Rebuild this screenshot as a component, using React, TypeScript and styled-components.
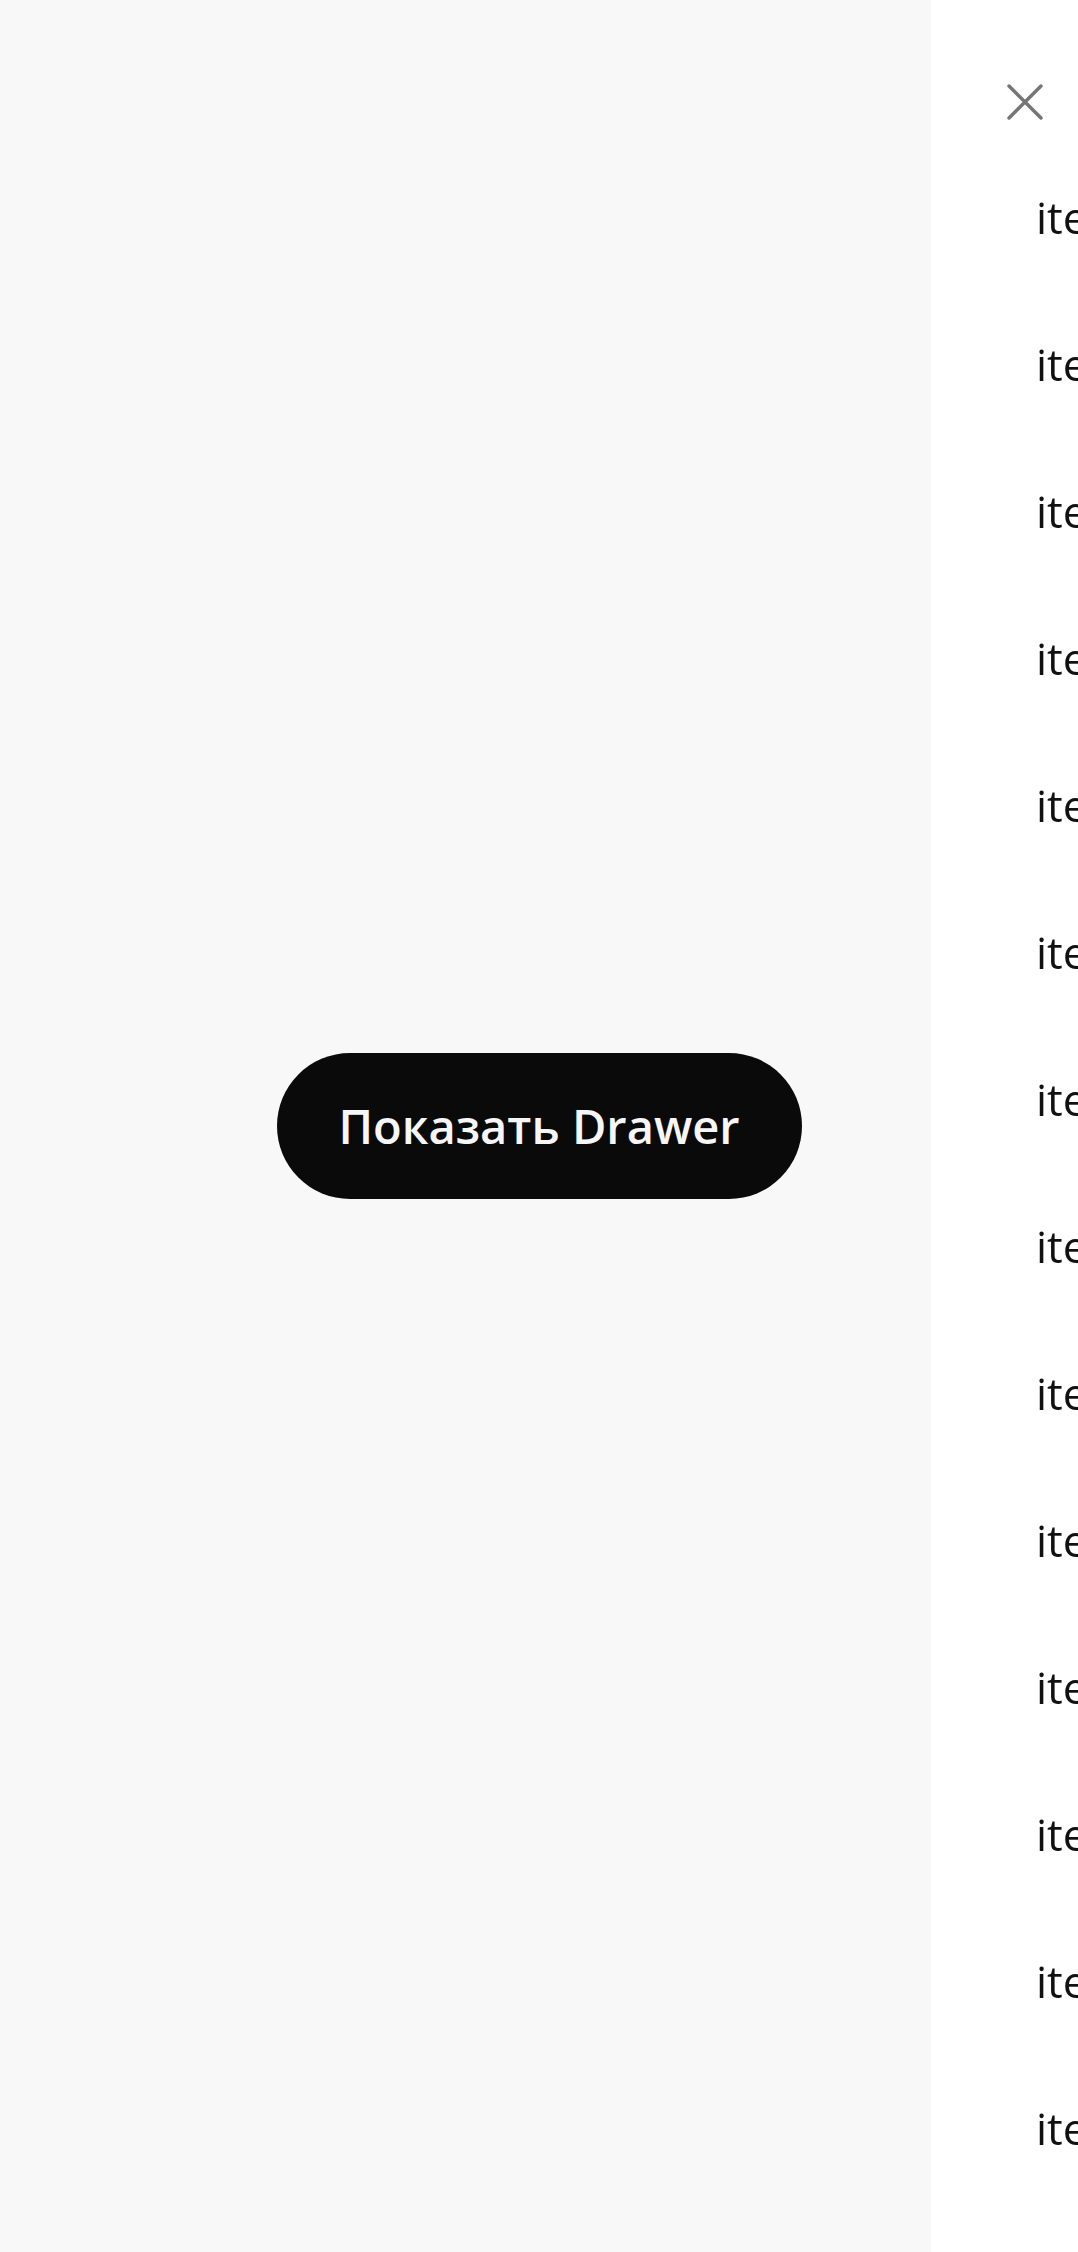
import React from "react"
import styled, { createGlobalStyle } from "styled-components"

const GlobalStyle = createGlobalStyle`
  html, body {
    margin: 0;
    padding: 0;
    height: 100%;
    overflow: hidden;
    background: #f8f8f8;
    font-family: "Open Sans", "Noto Sans", sans-serif;
  }
  #root {
    height: 100%;
  }
`

const Page = styled.div`
  height: 100vh;
  display: flex;
  align-items: center;
  justify-content: center;
`

const ShowButton = styled.button`
  height: 146px;
  width: 525px;
  padding: 0;
  border: 0;
  border-radius: 73px;
  background: #0a0a0a;
  color: #f6f6f6;
  font-family: inherit;
  font-size: 47px;
  font-weight: 600;
  cursor: pointer;
`

const Drawer = styled.aside`
  position: fixed;
  top: 0;
  left: 931px;
  width: 420px;
  height: 100vh;
  background: #ffffff;
  display: flex;
  flex-direction: column;
`

const CloseButton = styled.button`
  align-self: flex-start;
  margin: 84px 0 0 76px;
  padding: 0;
  width: 36px;
  height: 36px;
  border: 0;
  background: none;
  color: #757575;
  cursor: pointer;
  display: flex;
`

const ItemList = styled.ul`
  list-style: none;
  margin: 24px 0 0;
  padding: 0 0 0 105px;
`

const Item = styled.li`
  font-size: 44px;
  line-height: 147px;
  color: #111111;
  white-space: nowrap;
`

const CloseIcon = () => (
  <svg width="36" height="36" viewBox="0 0 36 36" fill="none">
    <path d="M2 2 L34 34 M34 2 L2 34" stroke="currentColor" strokeWidth="3.4" strokeLinecap="round" />
  </svg>
)

const items = Array.from({ length: 15 }, (_, i) => `item ${i + 1}`)

export default function App() {
  const [open, setOpen] = React.useState(true)

  return (
    <>
      <GlobalStyle />
      <Page>
        <ShowButton onClick={() => setOpen(true)}>Показать Drawer</ShowButton>
      </Page>
      {open && (
        <Drawer>
          <CloseButton aria-label="close" onClick={() => setOpen(false)}>
            <CloseIcon />
          </CloseButton>
          <ItemList>
            {items.map((item) => (
              <Item key={item}>{item}</Item>
            ))}
          </ItemList>
        </Drawer>
      )}
    </>
  )
}
